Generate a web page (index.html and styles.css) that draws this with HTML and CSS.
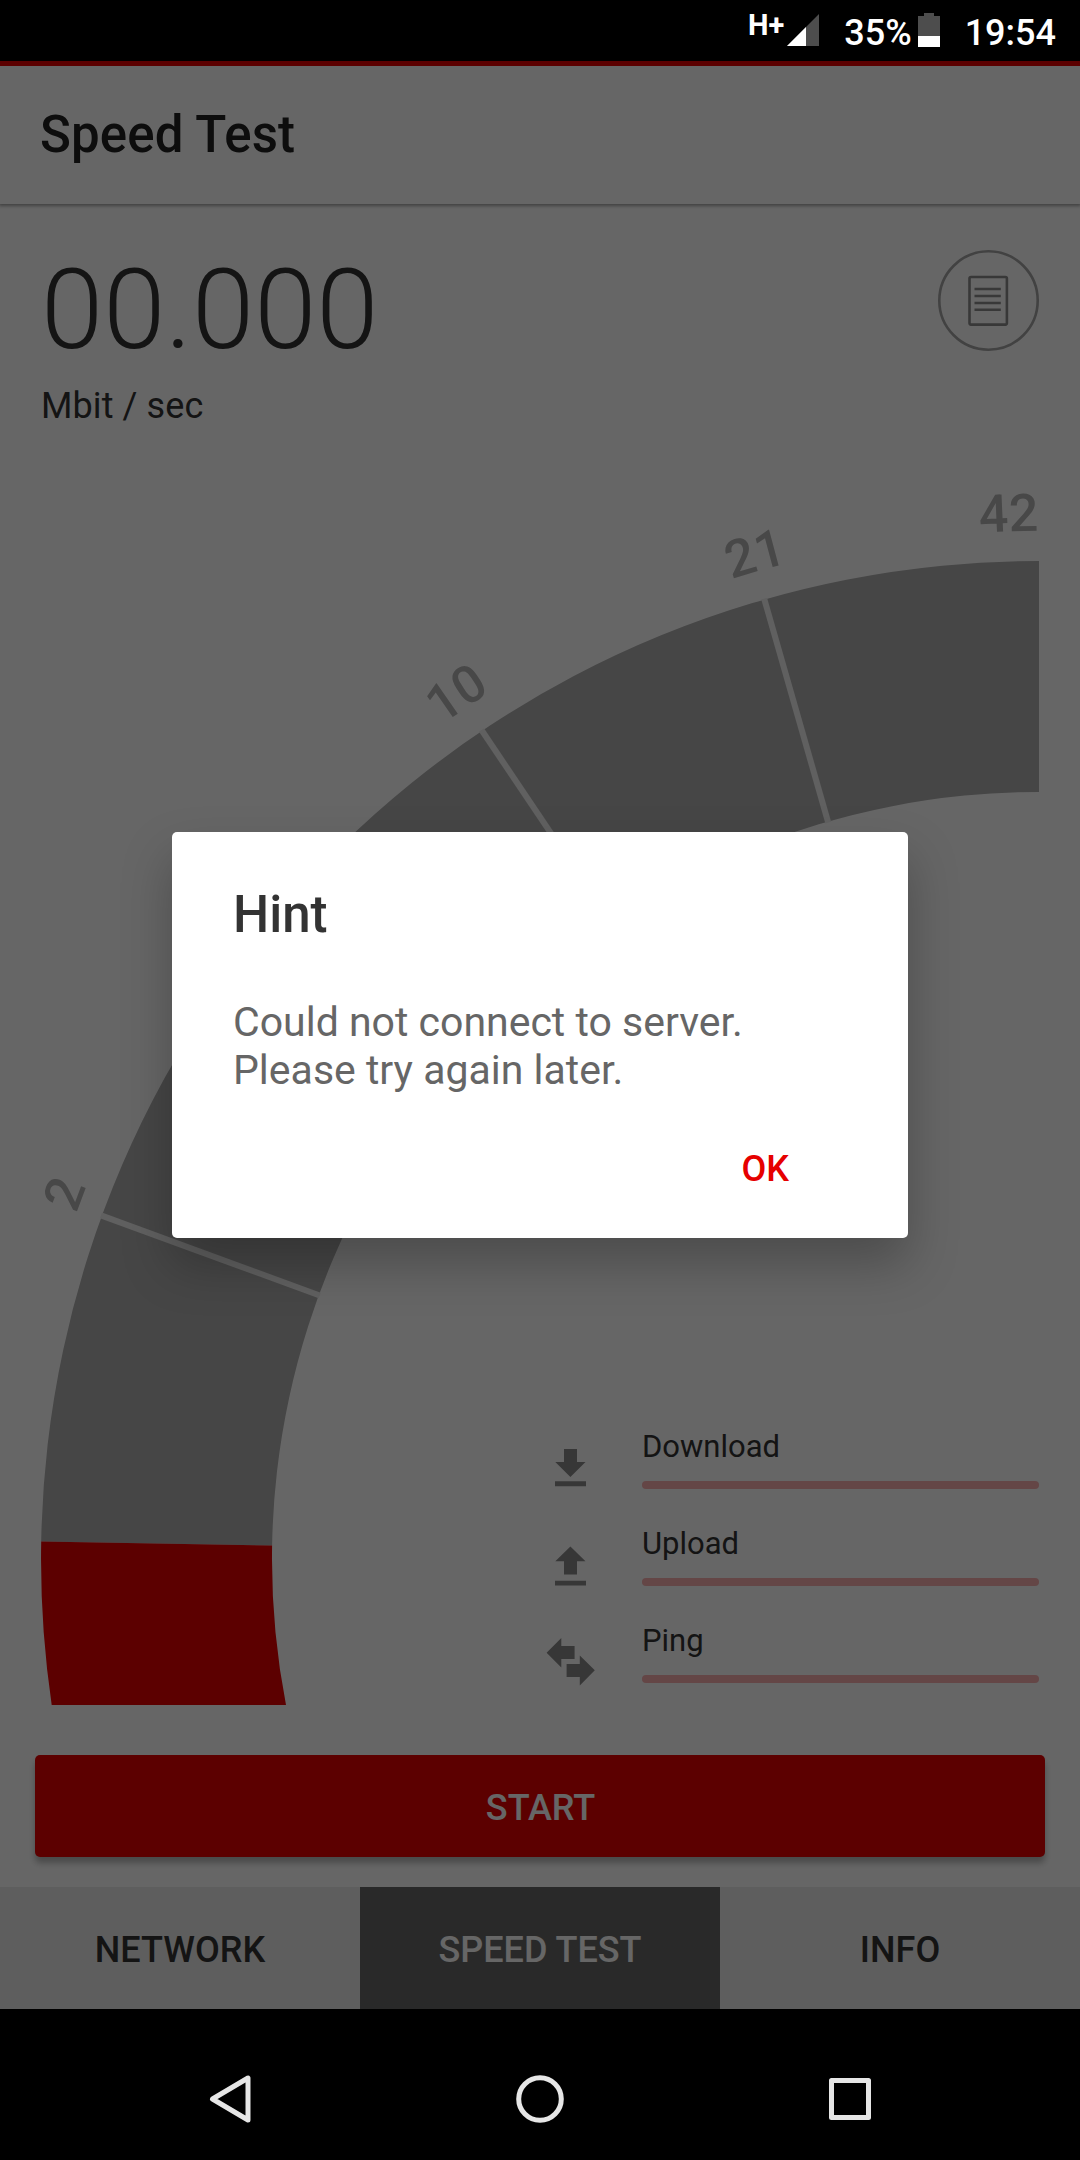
FILE: index.html
```html
<!DOCTYPE html>
<html lang="en">
<head>
  <meta charset="UTF-8" />
  <meta name="viewport" content="width=device-width, initial-scale=1.0"/>
  <title>Speed Test</title>
  <link rel="stylesheet" href="styles.css">
</head>
<body>
  <div class="status-bar">
    <span class="network-type">H+</span>
    <svg class="signal" width="32" height="32" viewBox="0 0 32 32">
      <path d="M0 32 L32 0 V32 Z" fill="#4d4d4d"/>
      <path d="M0 32 L19 13 V32 Z" fill="#fff"/>
    </svg>
    <span class="battery-level">35%</span>
    <svg class="battery" width="22" height="34" viewBox="0 0 22 34">
      <path d="M0 3 H6 V0 H16 V3 H22 V34 H0 Z" fill="#4d4d4d"/>
      <rect y="23" width="22" height="11" fill="#fff"/>
    </svg>
    <span class="clock">19:54</span>
  </div>

  <div class="app">
    <header class="app-header">
      <h1>Speed Test</h1>
    </header>

    <main class="panel">
      <div class="reading">
        <div>
          <div class="reading-value">00.000</div>
          <div class="reading-unit">Mbit / sec</div>
        </div>
        <svg class="history" width="102" height="102" viewBox="0 0 102 102" fill="none">
          <circle cx="51.5" cy="50.5" r="49.2" stroke="#a5a5a5" stroke-width="2.6"/>
          <rect x="32.5" y="27" width="37.4" height="47.6" rx="1.5" stroke="#8c8c8c" stroke-width="2.6"/>
          <path d="M37.5 39 H63.8 M37.5 46 H63.8 M37.5 53 H63.8 M37.5 59.7 H63.8" stroke="#8c8c8c" stroke-width="2.4"/>
        </svg>
      </div>

      <div class="stage">
        <svg class="gauge" width="1080" height="1245" viewBox="0 460 1080 1245">
          <defs>
            <path id="scale" d="M11 1559 A1028 1028 0 0 1 2067 1559"/>
          </defs>
          <path class="gauge-track" d="M41.2 1541.6 A998 998 0 0 1 1039 561 V792 A767 767 0 0 0 272.1 1545.6 Z"/>
          <path class="gauge-fill" d="M41.2 1541.6 A998 998 0 0 0 51.7 1705 H286 A767 767 0 0 1 272.1 1545.6 Z"/>
          <g class="gauge-ticks">
            <path d="M1039 793 V560" transform="rotate(-15.97 1039 1559)"/>
            <path d="M1039 793 V560" transform="rotate(-33.92 1039 1559)"/>
            <path d="M1039 793 V560" transform="rotate(-69.88 1039 1559)"/>
          </g>
          <g class="gauge-labels">
            <text><textPath href="#scale" startOffset="49.07%">42</textPath></text>
            <text dy="1"><textPath href="#scale" startOffset="41.23%">21</textPath></text>
            <text dy="2"><textPath href="#scale" startOffset="31.14%">10</textPath></text>
            <text dy="5"><textPath href="#scale" startOffset="11.42%">2</textPath></text>
          </g>
        </svg>

        <div class="metrics">
          <div class="metric">
            <svg class="metric-icon" width="50" height="62" viewBox="0 0 50 62">
              <path d="M18 22 H31 V35 H39.5 L24.4 50 L9.3 35 H18 Z M9 54.3 H40 V59.2 H9 Z"/>
            </svg>
            <div>
              <div class="metric-name">Download</div>
              <div class="metric-bar"></div>
            </div>
          </div>
          <div class="metric">
            <svg class="metric-icon" width="50" height="62" viewBox="0 0 50 62">
              <path d="M24.4 22.5 L39.5 37.3 H31 V50.5 H18 V37.3 H9.3 Z M9 56.7 H40 V61.6 H9 Z"/>
            </svg>
            <div>
              <div class="metric-name">Upload</div>
              <div class="metric-bar"></div>
            </div>
          </div>
          <div class="metric">
            <svg class="metric-icon" width="50" height="62" viewBox="0 0 50 62">
              <path d="M.6 31.7 L15.3 17 V25 H28.6 V38 H15.3 V46.5 Z M48.8 49.3 L33.8 34.5 V43 H20.6 V56 H33.8 V64.5 Z"/>
            </svg>
            <div>
              <div class="metric-name">Ping</div>
              <div class="metric-bar"></div>
            </div>
          </div>
        </div>
      </div>

      <button class="start">START</button>
    </main>

    <nav class="tabs">
      <a class="tab">NETWORK</a>
      <a class="tab active">SPEED TEST</a>
      <a class="tab">INFO</a>
    </nav>

    <div class="scrim">
      <div class="dialog">
        <h2>Hint</h2>
        <p>Could not connect to server.<br>Please try again later.</p>
        <button class="dialog-ok">OK</button>
      </div>
    </div>
  </div>

  <div class="nav-bar">
    <svg width="48" height="52" viewBox="0 0 48 52"><path d="M6.5 26 L42 5 V47 Z"/></svg>
    <svg width="52" height="52" viewBox="0 0 52 52"><circle cx="26" cy="26" r="21.3"/></svg>
    <svg width="48" height="52" viewBox="0 0 48 52"><rect x="5.5" y="7.5" width="37" height="37"/></svg>
  </div>
</body>
</html>
```

FILE: styles.css
```css
body {
  margin: 0;
  width: 1080px;
  height: 2160px;
  overflow: hidden;
  display: flex;
  flex-direction: column;
  font-family: Roboto, sans-serif;
  background-color: #000;
  color: #333;
}

/* system status bar */
.status-bar {
  height: 61px;
  display: flex;
  box-sizing: border-box;
  padding-right: 24px;
  justify-content: flex-end;
  color: #fff;
  font-size: 36px;
  font-weight: 500;
  line-height: 67px;
}

.network-type {
  font-size: 29px;
  font-weight: 700;
  line-height: 51px;
  margin-right: 3px;
}

.signal {
  margin: 14px 25px 0 0;
}

.battery {
  margin: 13px 25px 0 6px;
}

/* app */
.app {
  position: relative;
  height: 1948px;
  display: flex;
  flex-direction: column;
  background-color: #fff;
}

.app-header {
  height: 138px;
  border-top: 5px solid #e60000;
  box-shadow: 0 1px 3px 1px rgba(0, 0, 0, 0.35);
}

h1 {
  margin: 0;
  padding-left: 40px;
  font-size: 51px;
  font-weight: 500;
  line-height: 138px;
  letter-spacing: 0.15px;
  color: #212121;
}

.panel {
  flex: 1;
  display: flex;
  flex-direction: column;
}

.reading {
  display: flex;
  justify-content: space-between;
  height: 210px;
  padding: 46px 41px 0 41px;
}

.reading-value {
  margin-top: 10px;
  font-size: 112px;
  font-weight: 300;
  line-height: 100px;
}

.reading-unit {
  margin-top: 24px;
  font-size: 36px;
  line-height: 44px;
  letter-spacing: 0.1px;
}

.stage {
  display: grid;
}

.gauge,
.metrics {
  grid-area: 1 / 1;
}

.gauge-track {
  fill: #afafaf;
}

.gauge-fill {
  fill: #e60000;
}

.gauge-ticks {
  stroke: #f0f0f0;
  stroke-width: 6;
}

.gauge-labels {
  fill: #b4b4b4;
  font-size: 52px;
  font-weight: 500;
  text-anchor: middle;
}

.metrics {
  align-self: end;
  display: flex;
  flex-direction: column;
  gap: 35px;
  padding: 0 41px 22px 546px;
}

.metric {
  display: grid;
  grid-template-columns: 50px 1fr;
  gap: 46px;
  height: 62px;
}

.metric-icon {
  overflow: visible;
  fill: #8a8a8a;
}

.metric-name {
  font-size: 31px;
  line-height: 40px;
}

.metric-bar {
  height: 8px;
  margin-top: 14px;
  border-radius: 4px;
  background-color: #f9aeae;
}

.start {
  height: 102px;
  margin: 50px 35px 0;
  padding: 3px 0 0 1px;
  border: none;
  border-radius: 5px;
  background-color: #e60000;
  box-shadow: 0 6px 6px rgba(0, 0, 0, 0.28);
  color: #fff;
  font-family: inherit;
  font-size: 36px;
  font-weight: 500;
}

.tabs {
  display: flex;
  height: 122px;
}

.tab {
  flex: 1;
  background-color: #ebebeb;
  font-size: 36px;
  font-weight: 500;
  line-height: 127px;
  text-align: center;
}

.tab.active {
  background-color: #666;
  color: #fff;
}

/* dialog over the dimmed app */
.scrim {
  position: absolute;
  inset: 0;
  display: flex;
  justify-content: center;
  align-items: flex-start;
  background-color: rgba(0, 0, 0, 0.6);
}

.dialog {
  display: flex;
  flex-direction: column;
  box-sizing: border-box;
  width: 736px;
  height: 406px;
  margin-top: 771px;
  padding: 52px 61px 0;
  border-radius: 5px;
  background-color: #fff;
  box-shadow: 0 26px 50px rgba(0, 0, 0, 0.26);
}

h2 {
  margin: 0;
  font-size: 51px;
  font-weight: 500;
  line-height: 62px;
}

.dialog p {
  margin: 52px 0 0;
  font-size: 41px;
  line-height: 48px;
  color: #666;
}

.dialog-ok {
  align-self: flex-end;
  margin: 51px 58px 0 0;
  padding: 0;
  border: none;
  background: none;
  color: #e60000;
  font-family: inherit;
  font-size: 36px;
  font-weight: 500;
  line-height: 48px;
}

/* system navigation bar */
.nav-bar {
  flex: 1;
  display: flex;
  justify-content: space-between;
  align-items: center;
  padding: 29px 206px 0;
}

.nav-bar svg {
  fill: none;
  stroke: #e6e6e6;
  stroke-width: 5;
  stroke-linejoin: round;
}
```
